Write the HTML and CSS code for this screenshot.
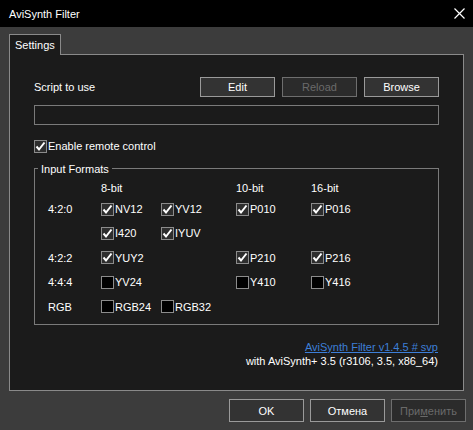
FILE: index.html
```html
<!DOCTYPE html>
<html>
<head>
<meta charset="utf-8">
<link rel="stylesheet" href="styles.css">
</head>
<body>
<div class="window">
  <div class="titlebar">
    <span class="title">AviSynth Filter</span>
    <svg class="close" width="11" height="11" viewBox="0 0 11 11"><path d="M0.5 0.5 L10.5 10.5 M10.5 0.5 L0.5 10.5" stroke="#fff" stroke-width="1.2" fill="none"/></svg>
  </div>
  <div class="client">
    <div class="tabs"><div class="tab">Settings</div></div>
    <div class="panel">
      <div class="script-row">
        <span class="label">Script to use</span>
        <button class="btn">Edit</button>
        <button class="btn disabled">Reload</button>
        <button class="btn">Browse</button>
      </div>
      <div class="textbox"></div>
      <label class="check remote"><span class="box on"><svg viewBox="0 0 13 13"><path d="M2.5 6.5 L5 9.5 L10.5 2.5" stroke="#fff" stroke-width="2" fill="none"/></svg></span>Enable remote control</label>
      <div class="group">
        <div class="legend">Input Formats</div>
        <div class="grid">
          <span></span><span class="hdr">8-bit</span><span></span><span class="hdr">10-bit</span><span class="hdr">16-bit</span>

          <span class="rl">4:2:0</span>
          <label class="check"><span class="box on"><svg viewBox="0 0 13 13"><path d="M2.5 6.5 L5 9.5 L10.5 2.5" stroke="#fff" stroke-width="2" fill="none"/></svg></span>NV12</label>
          <label class="check"><span class="box on"><svg viewBox="0 0 13 13"><path d="M2.5 6.5 L5 9.5 L10.5 2.5" stroke="#fff" stroke-width="2" fill="none"/></svg></span>YV12</label>
          <label class="check"><span class="box on"><svg viewBox="0 0 13 13"><path d="M2.5 6.5 L5 9.5 L10.5 2.5" stroke="#fff" stroke-width="2" fill="none"/></svg></span>P010</label>
          <label class="check"><span class="box on"><svg viewBox="0 0 13 13"><path d="M2.5 6.5 L5 9.5 L10.5 2.5" stroke="#fff" stroke-width="2" fill="none"/></svg></span>P016</label>

          <span></span>
          <label class="check"><span class="box on"><svg viewBox="0 0 13 13"><path d="M2.5 6.5 L5 9.5 L10.5 2.5" stroke="#fff" stroke-width="2" fill="none"/></svg></span>I420</label>
          <label class="check"><span class="box on"><svg viewBox="0 0 13 13"><path d="M2.5 6.5 L5 9.5 L10.5 2.5" stroke="#fff" stroke-width="2" fill="none"/></svg></span>IYUV</label>
          <span></span><span></span>

          <span class="rl">4:2:2</span>
          <label class="check"><span class="box on"><svg viewBox="0 0 13 13"><path d="M2.5 6.5 L5 9.5 L10.5 2.5" stroke="#fff" stroke-width="2" fill="none"/></svg></span>YUY2</label>
          <span></span>
          <label class="check"><span class="box on"><svg viewBox="0 0 13 13"><path d="M2.5 6.5 L5 9.5 L10.5 2.5" stroke="#fff" stroke-width="2" fill="none"/></svg></span>P210</label>
          <label class="check"><span class="box on"><svg viewBox="0 0 13 13"><path d="M2.5 6.5 L5 9.5 L10.5 2.5" stroke="#fff" stroke-width="2" fill="none"/></svg></span>P216</label>

          <span class="rl">4:4:4</span>
          <label class="check"><span class="box"></span>YV24</label>
          <span></span>
          <label class="check"><span class="box"></span>Y410</label>
          <label class="check"><span class="box"></span>Y416</label>

          <span class="rl">RGB</span>
          <label class="check"><span class="box"></span>RGB24</label>
          <label class="check"><span class="box"></span>RGB32</label>
          <span></span><span></span>
        </div>
      </div>
      <div class="info">
        <a class="link" href="#">AviSynth Filter v1.4.5 # svp</a>
        <span class="ver">with AviSynth+ 3.5 (r3106, 3.5, x86_64)</span>
      </div>
    </div>
    <div class="footer">
      <button class="btn big">OK</button>
      <button class="btn big">Отмена</button>
      <button class="btn big disabled">При<u>м</u>енить</button>
    </div>
  </div>
</div>
</body>
</html>
```
FILE: styles.css
```css
* { box-sizing: border-box; }
html, body { margin: 0; padding: 0; }
body {
  width: 473px;
  height: 430px;
  overflow: hidden;
  background: #3c3c3c;
  font-family: "Liberation Sans", Arial, sans-serif;
  font-size: 11px;
  color: #fff;
}
.window { width: 473px; height: 430px; display: flex; flex-direction: column; }
.titlebar {
  height: 27px;
  background: #000;
  display: flex;
  align-items: center;
  justify-content: space-between;
  padding: 0 7px 0 9px;
}
.title { font-size: 11px; line-height: 14px; color: #fff; }
.close { display: block; margin-right: 1px; }
.client {
  flex: 1;
  background: #3c3c3c;
  padding: 7px 9px 0 9px;
}
.tabs { display: flex; height: 20px; }
.tab {
  width: 52px;
  height: 21px;
  background: #1b1b1b;
  border: 1px solid #8a8a8a;
  border-bottom: none;
  padding: 3px 0 0 5px;
  line-height: 14px;
  position: relative;
  z-index: 1;
}
.panel {
  width: 455px;
  height: 337px;
  background: #1b1b1b;
  border: 1px solid #8a8a8a;
  padding: 22px 24px 0 24px;
  display: flex;
  flex-direction: column;
}
.script-row { display: flex; align-items: center; gap: 7px; height: 20px; }
.script-row .label { flex: 1; line-height: 14px; }
.btn {
  width: 75px;
  height: 20px;
  background: #333;
  border: 1px solid #9a9a9a;
  color: #fff;
  font-family: inherit;
  font-size: 11px;
  padding: 0;
  margin: 0;
  line-height: 14px;
}
.btn.disabled { color: #6a6a6a; border-color: #6e6e6e; background: #2b2b2b; }
.btn u { text-decoration: underline; }
.textbox {
  margin-top: 8px;
  height: 20px;
  border: 1px solid #7a7a7a;
  background: #1b1b1b;
}
.check {
  display: flex;
  align-items: center;
  height: 14px;
  line-height: 14px;
  white-space: nowrap;
}
.box {
  width: 13px;
  height: 13px;
  border: 1px solid #8c8c8c;
  background: #000;
  margin-right: 1px;
  flex: none;
  display: block;
  position: relative;
}
.box.on { background: #2e2e2e; }
.box svg { position: absolute; left: -1px; top: -1px; width: 13px; height: 13px; }
.remote { margin-top: 14px; }
.group {
  margin-top: 15px;
  height: 157px;
  border: 1px solid #7a7a7a;
  padding: 0 0 0 13px;
}
.legend {
  width: fit-content;
  margin: -7px 0 0 -10px;
  padding: 0 3px;
  background: #1b1b1b;
  line-height: 14px;
}
.grid {
  margin-top: 5px;
  display: grid;
  grid-template-columns: 53px 60px 75px 75px 75px;
  grid-template-rows: 14px 24px 24px 25px 24px 25px;
  row-gap: 0;
  align-items: center;
}
.grid .hdr { line-height: 14px; align-self: start; }
.grid > :nth-child(-n+5) { margin-bottom: 2px; }
.rl { line-height: 14px; }
.grid { grid-template-rows: 16px 24px 24px 25px 24px 25px; }
.info {
  margin-top: 15px;
  display: flex;
  flex-direction: column;
  align-items: flex-end;
  line-height: 14px;
  padding-right: 1px;
}
.link { color: #3d7fd8; text-decoration: underline; }
.ver { color: #fff; }
.footer {
  display: flex;
  justify-content: flex-end;
  gap: 6px;
  padding: 8px 7px 0 0;
  margin-right: -9px;
}
.btn.big { height: 23px; }
```
